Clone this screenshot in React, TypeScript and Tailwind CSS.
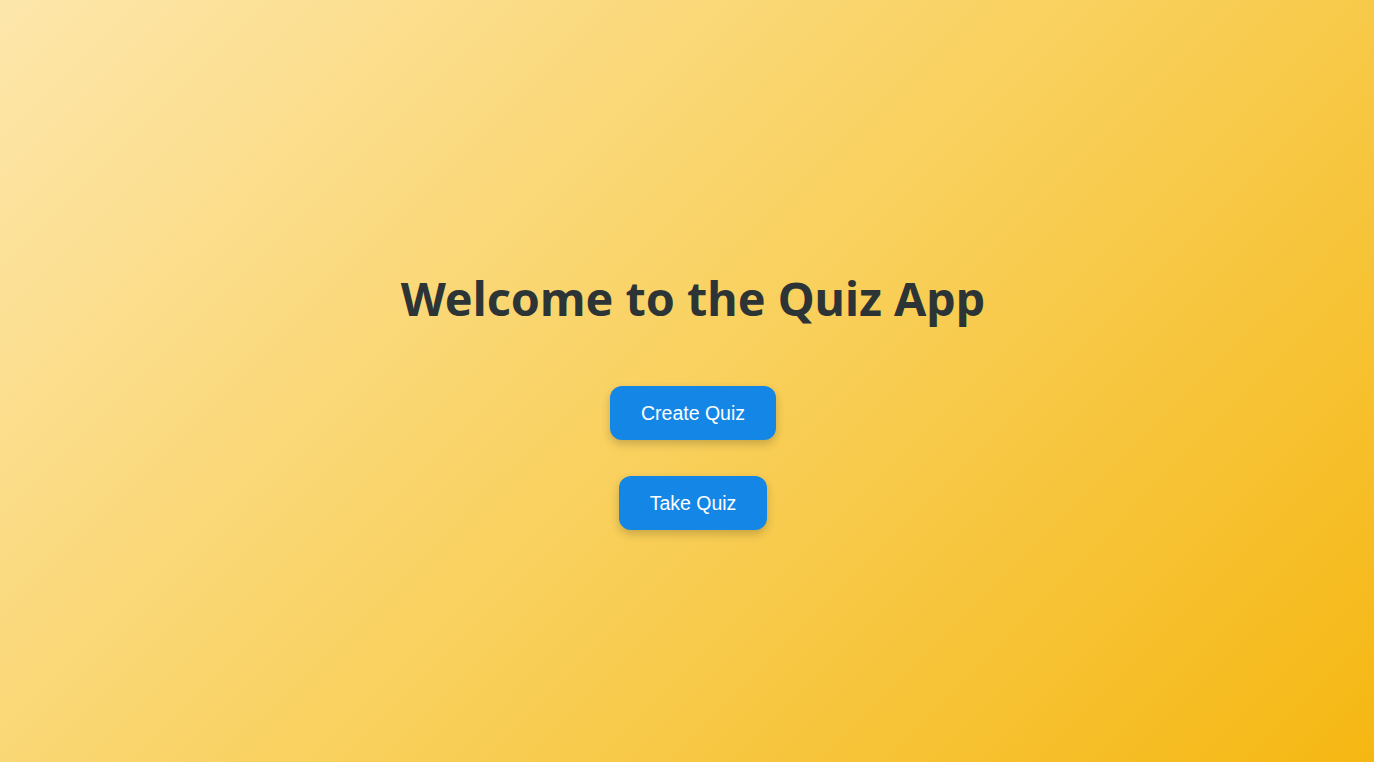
export default function App() {
  return (
    <div className="min-h-screen w-full flex flex-col items-center justify-center pl-[12px] bg-[linear-gradient(135deg,#fde6ab_0%,#f9d15f_50%,#f5b712_100%)]">
      <h1 className="font-['Noto_Sans',sans-serif] font-bold text-[46.7px] leading-[60px] text-[#2d3436] mt-[36px]">
        Welcome to the Quiz App
      </h1>
      <div className="flex flex-col items-center gap-[36px] mt-[58px]">
        <button className="bg-[#1487e6] text-white font-['Liberation_Sans',Arial,sans-serif] text-[19.5px] leading-[24px] px-[31px] py-[15px] rounded-[12px] shadow-[0_4px_10px_rgba(0,0,0,0.2)]">
          Create Quiz
        </button>
        <button className="bg-[#1487e6] text-white font-['Liberation_Sans',Arial,sans-serif] text-[19.5px] leading-[24px] px-[31px] py-[15px] rounded-[12px] shadow-[0_4px_10px_rgba(0,0,0,0.2)]">
          Take Quiz
        </button>
      </div>
    </div>
  );
}
